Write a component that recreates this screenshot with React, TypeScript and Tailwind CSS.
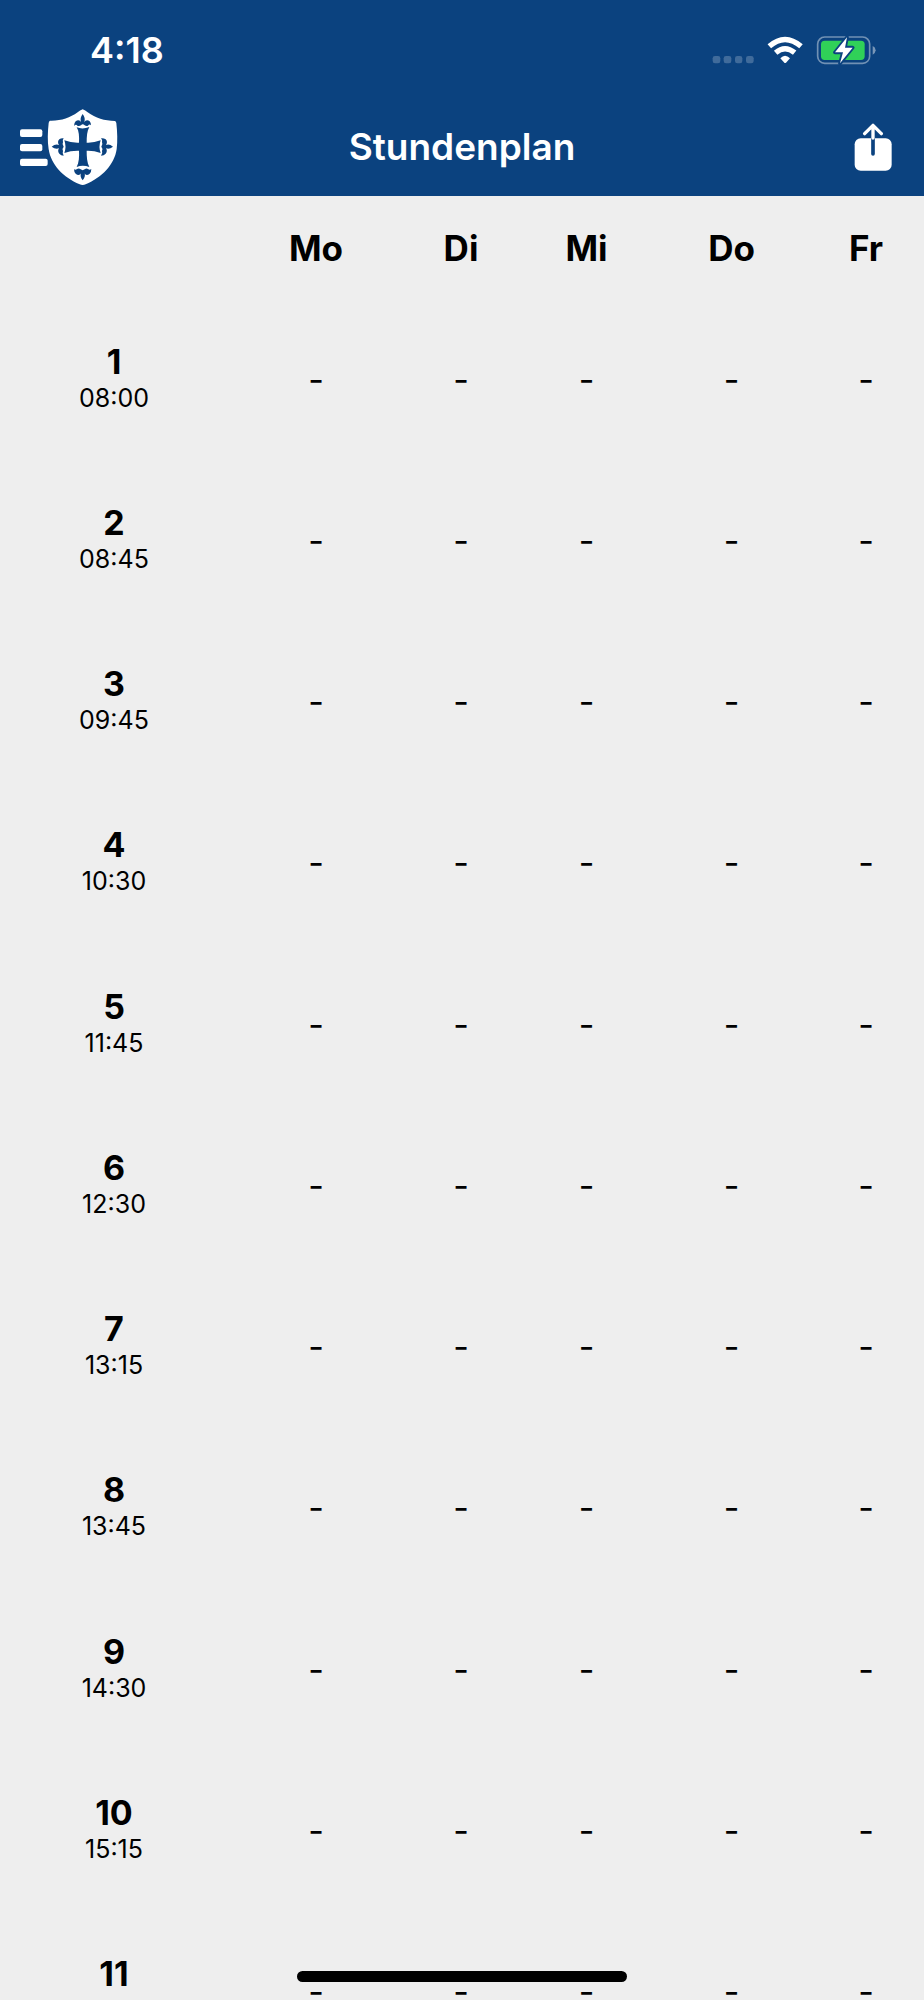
import React from 'react';

interface Lesson {
  number: number;
  start: string;
}

const days = ['Mo', 'Di', 'Mi', 'Do', 'Fr'];

const lessons: Lesson[] = [
  { number: 1, start: '08:00' },
  { number: 2, start: '08:45' },
  { number: 3, start: '09:45' },
  { number: 4, start: '10:30' },
  { number: 5, start: '11:45' },
  { number: 6, start: '12:30' },
  { number: 7, start: '13:15' },
  { number: 8, start: '13:45' },
  { number: 9, start: '14:30' },
  { number: 10, start: '15:15' },
  { number: 11, start: '16:00' },
];

const MenuLogo: React.FC = () => (
  <svg viewBox="60 324 294 234" className="h-[78px] w-[98px]" aria-hidden="true">
    <g fill="#fff">
      <rect x="60" y="388" width="67" height="23" rx="6" />
      <rect x="60" y="432" width="67" height="22" rx="6" />
      <rect x="60" y="476" width="83" height="22" rx="6" />
      <path d="M248 328Q256 331 263 337C287 354 313 363 345 363Q348 364 349 369C352 396 353 424 350 448C343 494 306 533 257 553Q248 557 239 553C190 533 153 494 146 448C142 424 143 396 146 369Q147 363 150 362C183 363 209 354 233 337Q240 331 248 328Z" />
    </g>
    <g fill="#0b427f">
      <path d="M230 382Q248 389 268 381C261 393 260 410 260 428Q281 429 302 421Q295 440 302 459Q281 451 260 452C260 470 261 488 268 501Q248 493 230 501C237 488 238 470 237 452Q214 451 193 459Q200 440 193 421Q214 429 237 428C238 410 237 393 230 382Z" />
      {/* upper and lower lilies */}
      <path d="M248 342Q257 353 253 367C256 359 264 359 269 364Q273 368 273 376Q268 370 264 377Q259 380 254 376Q248 370 243 376Q237 380 232 377Q228 371 222 378Q222 369 227 364C233 359 241 360 243 367Q239 353 248 342Z" />
      <path d="M248 541Q239 530 243 520C240 526 233 526 227 521Q222 516 222 508Q227 511 231 507Q237 504 242 508Q248 513 254 508Q259 504 264 507Q269 511 274 507Q274 516 269 521C263 526 256 526 254 520Q257 530 248 541Z" />
      {/* left and right lilies */}
      <path d="M155 440Q166 431 177 435C173 430 173 422 178 418Q183 414 191 415Q186 421 189 427Q185 434 191 440Q185 447 189 453Q186 460 191 467Q183 467 178 461C173 456 174 449 177 445Q166 449 155 440Z" />
      <path d="M339 440Q328 431 318 435C322 430 322 422 317 418Q311 414 303 415Q309 421 306 427Q310 434 304 440Q310 447 306 453Q309 460 303 467Q312 467 317 461C322 456 321 449 318 445Q328 449 339 440Z" />
    </g>
  </svg>
);

const ShareIcon: React.FC = () => (
  <svg viewBox="580 370 114 144" className="h-[48px] w-[38px]" aria-hidden="true">
    <rect x="582" y="416" width="111" height="97" rx="18" fill="#fff" />
    <path d="M637 416V463" stroke="#0b427f" strokeWidth="11" strokeLinecap="round" />
    <path
      d="M637 415V378M612 402L637 377L662 402"
      fill="none"
      stroke="#fff"
      strokeWidth="10"
      strokeLinecap="round"
      strokeLinejoin="round"
    />
  </svg>
);

const StatusIcons: React.FC = () => (
  <svg viewBox="156 108 492 87" className="h-[29px] w-[164px]" aria-hidden="true">
    <g fill="#fff" fillOpacity="0.22">
      <rect x="158" y="168" width="23" height="22" rx="7" />
      <rect x="191" y="168" width="23" height="22" rx="7" />
      <rect x="225" y="168" width="22" height="22" rx="7" />
      <rect x="258" y="168" width="23" height="22" rx="7" />
    </g>
    <g fill="none" stroke="#fff" strokeWidth="16">
      <path d="M328 139Q375 98 423 139" />
      <path d="M347 158Q375 134 404 158" />
    </g>
    <path d="M361 175Q375 160 390 175L378 188Q375 190 373 188Z" fill="#fff" />
    <rect
      x="473"
      y="111"
      width="156"
      height="79"
      rx="21"
      fill="none"
      stroke="#fff"
      strokeOpacity="0.42"
      strokeWidth="5"
    />
    <path d="M638 138Q646 141 647 151Q646 161 638 164Z" fill="#fff" fillOpacity="0.45" />
    <rect x="483" y="122" width="131" height="58" rx="11" fill="#30d158" />
    <path
      d="M561 112L525 157H549L540 190L578 143H555Z"
      fill="#fff"
      stroke="#0b427f"
      strokeWidth="11"
      strokeLinejoin="round"
      paintOrder="stroke"
    />
  </svg>
);

const Header: React.FC = () => (
  <header className="shrink-0 bg-[#0b427f] text-white">
    <div className="flex h-[100px] items-center justify-between pr-12 pl-[90px]">
      <span className="text-[36px] font-semibold">4:18</span>
      <StatusIcons />
    </div>
    <div className="grid h-24 grid-cols-[1fr_auto_1fr] items-center px-5 pb-0.5">
      <button type="button" aria-label="Menü" className="justify-self-start">
        <MenuLogo />
      </button>
      <h1 className="text-[37px] font-semibold">Stundenplan</h1>
      <button type="button" aria-label="Teilen" className="mr-3 justify-self-end">
        <ShareIcon />
      </button>
    </div>
  </header>
);

const LessonRow: React.FC<Lesson> = ({ number, start }: Lesson) => (
  <tr>
    <th scope="row" className="p-0 pt-0.5 font-normal">
      <div className="text-[34px] leading-9 font-bold">{number}</div>
      <div className="text-[25px] leading-9">{start}</div>
    </th>
    {days.map(day => (
      <td key={day} className="p-0 pt-0.5 text-center text-[34px] leading-9">
        -
      </td>
    ))}
  </tr>
);

const App: React.FC = () => (
  <div className="flex h-screen flex-col bg-[#eeeeee] font-['Inter',sans-serif] text-black">
    <Header />
    <main className="min-h-0 flex-1 overflow-y-auto [scrollbar-width:none]">
      <table className="h-[1876px] w-full table-fixed border-collapse">
        <colgroup>
          <col className="w-[228px]" />
          <col className="w-[176px]" />
          <col className="w-[114px]" />
          <col className="w-[137px]" />
          <col className="w-[153px]" />
          <col className="w-[116px]" />
        </colgroup>
        <thead>
          <tr className="h-[102px]">
            <td className="p-0" />
            {days.map(day => (
              <th key={day} scope="col" className="p-0 pt-0.5 text-[35px] font-bold">
                {day}
              </th>
            ))}
          </tr>
        </thead>
        <tbody>
          {lessons.map(lesson => (
            <LessonRow key={lesson.number} {...lesson} />
          ))}
        </tbody>
      </table>
    </main>
    <div className="fixed bottom-[18px] left-1/2 h-[11px] w-[330px] -translate-x-1/2 rounded-full bg-black" />
  </div>
);

export default App;
